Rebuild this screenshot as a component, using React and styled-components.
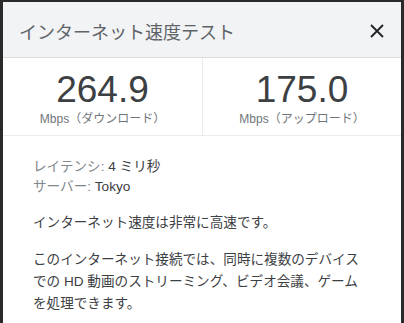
import React from "react";
import styled, { createGlobalStyle } from "styled-components";

const Global = createGlobalStyle`
  html, body { margin: 0; padding: 0; background: #2a2a2a; }
  body { font-family: "Liberation Sans", "Noto Sans CJK JP", sans-serif; }
`;

const Panel = styled.div`
  margin: 2px 3px 0 3px;
  height: 321px;
  background: #fff;
  overflow: hidden;
  display: flex;
  flex-direction: column;
`;

const Header = styled.div`
  height: 55px;
  background: #f1f3f4;
  border-bottom: 1px solid #dadce0;
  display: flex;
  align-items: center;
  justify-content: space-between;
  padding: 0 14px 0 16px;
  flex-shrink: 0;
`;

const Title = styled.div`
  font-family: "Noto Sans CJK JP", sans-serif;
  font-size: 18px;
  color: #5f6368;
  line-height: 24px;
  padding-top: 2px;
`;

const Close = styled.button`
  border: 0;
  background: none;
  padding: 0;
  width: 20px;
  height: 20px;
  display: flex;
  align-items: center;
  justify-content: center;
  margin-top: 2px;
`;

const Stats = styled.div`
  display: grid;
  grid-template-columns: 199px 1fr;
  height: 77px;
  border-bottom: 1px solid #ebebeb;
  flex-shrink: 0;
`;

const Stat = styled.div`
  display: flex;
  flex-direction: column;
  align-items: center;
  padding-top: 13px;
  border-left: ${(p) => (p.$divider ? "1px solid #ebebeb" : "none")};
`;

const Value = styled.div`
  font-family: "Liberation Sans", Arial, sans-serif;
  font-size: 37px;
  line-height: 38px;
  color: #3c4043;
`;

const Unit = styled.div`
  font-family: "Liberation Sans", "Noto Sans CJK JP", sans-serif;
  font-size: 12px;
  line-height: 18px;
  color: #70757a;
  margin-top: 1px;
`;

const Body = styled.div`
  padding: 21px 34px 0 30px;
  font-family: "Liberation Sans", "Noto Sans CJK JP", sans-serif;
  font-size: 13.6px;
  color: #3c4043;
`;

const Info = styled.div`
  line-height: 20px;
`;

const Label = styled.span`
  color: #80868b;
`;

const Para = styled.p`
  margin: 15px 0 0 0;
  line-height: 22px;
`;

export default function App() {
  return (
    <>
      <Global />
      <Panel>
        <Header>
          <Title>インターネット速度テスト</Title>
          <Close aria-label="閉じる">
            <svg width="14" height="14" viewBox="0 0 14 14">
              <path d="M1 1 L13 13 M13 1 L1 13" stroke="#202124" strokeWidth="1.8" />
            </svg>
          </Close>
        </Header>
        <Stats>
          <Stat>
            <Value>264.9</Value>
            <Unit>Mbps（ダウンロード）</Unit>
          </Stat>
          <Stat $divider>
            <Value>175.0</Value>
            <Unit>Mbps（アップロード）</Unit>
          </Stat>
        </Stats>
        <Body>
          <Info>
            <Label>レイテンシ: </Label>4 ミリ秒
          </Info>
          <Info>
            <Label>サーバー: </Label>Tokyo
          </Info>
          <Para>インターネット速度は非常に高速です。</Para>
          <Para>
            このインターネット接続では、同時に複数のデバイスでの HD 動画のストリーミング、ビデオ会議、ゲームを処理できます。
          </Para>
        </Body>
      </Panel>
    </>
  );
}
